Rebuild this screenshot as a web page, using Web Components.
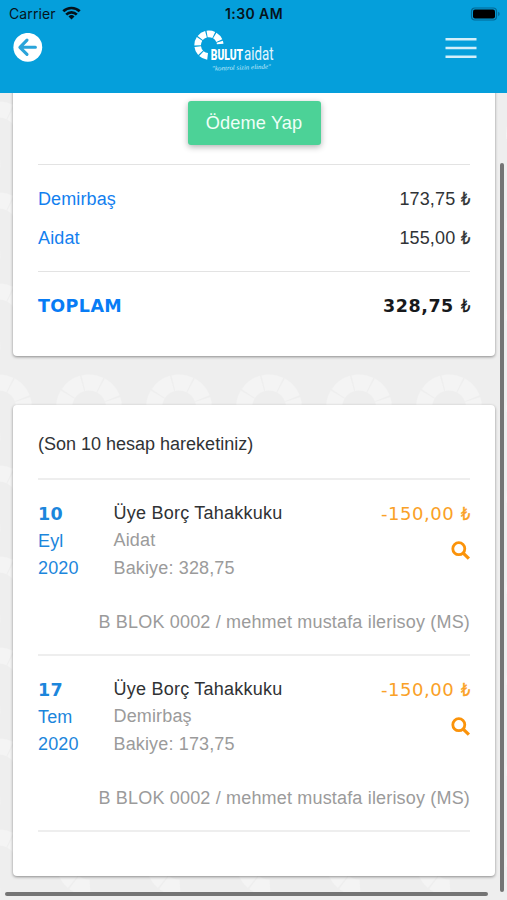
<!DOCTYPE html>
<html lang="tr">
<head>
<meta charset="utf-8">
<title>Bulut Aidat</title>
<style>
html,body{margin:0;height:100%;overflow:hidden;background:#eeeeee}
body{font-family:"Liberation Sans",Arial,sans-serif;font-size:18px;color:#303336}
</style>
</head>
<body>
<aidat-app></aidat-app>
<script>
const define = (name, html) => customElements.define(name, class extends HTMLElement {
  constructor() {
    super();
    const t = document.createElement('template');
    t.innerHTML = html;
    this.attachShadow({mode: 'open'}).append(t.content.cloneNode(true));
  }
});

define('status-bar', `<style>
:host{display:grid;grid-template-columns:216px auto 1fr;align-items:center;height:28px;padding:0 5px 0 9px;color:#06141c;font:14px/28px Inter,sans-serif}
.left{display:flex;align-items:center;gap:6px;letter-spacing:.1px}
.time{font-weight:600;font-size:14px;letter-spacing:.4px}
.right{justify-self:end;display:flex;margin-top:-1px;margin-right:1px}
.left svg{margin-top:-2px}
svg{display:block}
</style>
<div class="left"><span>Carrier</span><svg width="19" height="14" viewBox="0 0 19 14"><g fill="none" stroke="#04121a" stroke-width="2.7"><path d="M1.3 5.3a11.8 11.8 0 0 1 16.4 0"/><path d="M4.2 8.6a7.6 7.6 0 0 1 10.6 0"/></g><path fill="#04121a" d="M9.5 13.6 6.5 10.5a4.3 4.3 0 0 1 6 0z"/></svg></div>
<span class="time">1:30 AM</span>
<div class="right"><svg width="31" height="14" viewBox="0 0 31 14"><rect x="1.5" y="1" width="25" height="12" rx="3.4" fill="none" stroke="#036995" stroke-width="1.2"/><rect x="3" y="2.6" width="22" height="8.8" rx="2" fill="#000"/><path d="M28.2 4.8a2.4 2.4 0 0 1 0 4.4z" fill="#036995"/></svg></div>`);

define('brand-logo', `<style>
:host{display:block}svg{display:block;overflow:visible}
</style>
<svg width="90" height="46" viewBox="192 29 90 46">
<path d="M206.6 56.4A11.3 11.3 0 1 1 219.2 44" fill="none" stroke="#fff" stroke-width="6.6" stroke-dasharray="6.9 1.1"/>
<text x="209.8" y="59.6" font-family="Roboto,sans-serif" font-weight="900" font-size="14.5" fill="#fff" textLength="32.2" lengthAdjust="spacingAndGlyphs">BULUT</text>
<text x="243" y="59.6" font-family="Roboto,sans-serif" font-size="17.5" fill="#e2f5fd" textLength="29.5" lengthAdjust="spacingAndGlyphs">aidat</text>
<text x="211" y="70.6" transform="rotate(-2 211 70)" font-family="Liberation Serif,serif" font-style="italic" font-size="6.6" fill="#c2eafa" textLength="59" lengthAdjust="spacingAndGlyphs">"kontrol sizin elinde"</text>
</svg>`);

define('app-header', `<style>
:host{display:block;height:93px;background:#059fdb;position:relative;z-index:1}
nav{display:grid;grid-template-columns:179.5px auto 1fr;padding:1px 30px 0 13px}
.back{margin-top:4px}.menu{justify-self:end;margin-top:8px}
svg{display:block}
</style>
<status-bar></status-bar>
<nav>
<svg class="back" width="30" height="30" viewBox="0 0 30 30"><circle cx="14.8" cy="14.3" r="14.4" fill="#fff"/><path d="M22.4 14.3H8.2M14 7.2 6.9 14.3l7.1 7.1" fill="none" stroke="#2aa4da" stroke-width="3.1" stroke-linecap="round" stroke-linejoin="round"/></svg>
<brand-logo></brand-logo>
<svg class="menu" width="32" height="24" viewBox="0 0 32 24"><path d="M.5 2.3h31M.5 11h31M.5 19.7h31" stroke="#d3effa" stroke-width="2.4"/></svg>
</nav>`);

define('bg-pattern', `<style>
:host{position:absolute;inset:0;z-index:-1}svg{display:block}
</style>
<svg width="507" height="900"><defs><pattern id="p" width="90" height="91" patternUnits="userSpaceOnUse" x="-45" y="362"><path d="M45 68.5A25 25 0 1 1 69 43" fill="none" stroke="#f4f4f4" stroke-width="16" stroke-dasharray="17 1.3" transform="translate(0 2)"/></pattern></defs><rect width="507" height="900" fill="#eee"/><rect width="507" height="900" fill="url(#p)"/></svg>`);

define('info-card', `<style>
:host{display:block;box-sizing:border-box;background:#fff;border-radius:4px;padding:0 25px;box-shadow:0 1px 3px rgba(0,0,0,.42)}
</style><slot></slot>`);

define('pay-button', `<style>
:host{display:flex;justify-content:center}
button{width:133px;height:44px;border:0;border-radius:3px;background:#4cd297;color:#effff7;font:18.2px/44px "Liberation Sans",sans-serif;padding:0;letter-spacing:.15px;box-shadow:0 2px 6px rgba(0,0,0,.3)}
</style><button><slot></slot></button>`);

define('summary-row', `<style>
:host{display:flex;justify-content:space-between;align-items:center;height:39px;line-height:39px}
.label{color:#1380ef;letter-spacing:.12px}
.amount{letter-spacing:.15px}
:host([total]){font:bold 17.5px/39px "DejaVu Sans",sans-serif}
:host([total]) .label{color:#087cf5;letter-spacing:.4px}
:host([total]) .amount{letter-spacing:.55px;color:#17191c}
</style><span class="label"><slot></slot></span><span class="amount"><slot name="amount"></slot></span>`);

define('rule-line', `<style>:host{display:block;height:1px;background:#e3e3e3}:host([thick]){height:2px;background:#eee}</style>`);

define('account-entry', `<style>
:host{display:block;height:174px;box-sizing:border-box;padding-top:20px}
.main{display:grid;grid-template-columns:75.5px 1fr auto;line-height:27.3px}
.date{color:#1c86dc}
.day{font:bold 17.5px/27.3px "DejaVu Sans",sans-serif;letter-spacing:.3px;padding-top:1px;margin-bottom:-.5px}
.month,.year{letter-spacing:.15px}.year{margin-top:-.5px}
.info{color:#9b9b9b;letter-spacing:.15px}
.title{color:#303234;letter-spacing:.23px}
.side{text-align:right;color:#faa127;font:18px/27.3px "DejaVu Sans",sans-serif;letter-spacing:.55px}
svg{display:block;margin:14px 0 0 auto}
.owner{color:#9b9b9b;text-align:right;line-height:27px;margin-top:27px;white-space:nowrap;letter-spacing:.175px}
</style>
<div class="main">
<div class="date"><div class="day"><slot name="day"></slot></div><div class="month"><slot name="month"></slot></div><div class="year"><slot name="year"></slot></div></div>
<div class="info"><div class="title"><slot name="title"></slot></div><div><slot name="kind"></slot></div><div><slot name="balance"></slot></div></div>
<div class="side"><slot name="amount"></slot><svg width="19" height="19" viewBox="0 0 19 19" fill="none" stroke="#fb930a"><circle cx="7.8" cy="7.7" r="6" stroke-width="2.8"/><path d="m12.2 12.1 5.7 5.6" stroke-width="3.2"/></svg></div>
</div>
<div class="owner"><slot name="owner"></slot></div>`);

define('scroll-thumb', `<style>
:host{display:block;position:absolute;z-index:2;background:#747474;border-radius:2px}
:host([axis=y]){left:500px;top:163px;width:4px;height:729px}
:host([axis=x]){left:5px;top:892px;width:483px;height:4px}
</style>`);

define('aidat-app', `<style>
:host{display:block;position:relative;z-index:0;width:507px;height:900px;overflow:hidden;isolation:isolate}
main{padding:0 12px 0 13px}
.summary{margin-top:-20px;padding-top:28px;height:283px}
.summary pay-button{margin-bottom:19px}
.first{margin-top:15px}
.gap{margin-top:13px;margin-bottom:15px}
.history{height:471px;margin-top:49px;padding-top:25px}
.caption{line-height:28px;height:48px}
i{font:17px/20px "DejaVu Sans",sans-serif;letter-spacing:0;display:inline-block;width:9.5px;white-space:nowrap;transform:scaleX(.86);transform-origin:0 50%;-webkit-text-stroke:.35px currentColor}
</style>
<bg-pattern></bg-pattern>
<app-header></app-header>
<main>
<info-card class="summary">
<pay-button>Ödeme Yap</pay-button>
<rule-line></rule-line>
<summary-row class="first">Demirbaş<span slot="amount">173,75 <i>₺</i></span></summary-row>
<summary-row>Aidat<span slot="amount">155,00 <i>₺</i></span></summary-row>
<rule-line class="gap"></rule-line>
<summary-row total>TOPLAM<span slot="amount">328,75 <i>₺</i></span></summary-row>
</info-card>
<info-card class="history">
<div class="caption">(Son 10 hesap hareketiniz)</div>
<rule-line thick></rule-line>
<account-entry><span slot="day">10</span><span slot="month">Eyl</span><span slot="year">2020</span><span slot="title">Üye Borç Tahakkuku</span><span slot="kind">Aidat</span><span slot="balance">Bakiye: 328,75</span><span slot="amount">-150,00 <i>₺</i></span><span slot="owner">B BLOK 0002 / mehmet mustafa ilerisoy (MS)</span></account-entry>
<rule-line thick></rule-line>
<account-entry><span slot="day">17</span><span slot="month">Tem</span><span slot="year">2020</span><span slot="title">Üye Borç Tahakkuku</span><span slot="kind">Demirbaş</span><span slot="balance">Bakiye: 173,75</span><span slot="amount">-150,00 <i>₺</i></span><span slot="owner">B BLOK 0002 / mehmet mustafa ilerisoy (MS)</span></account-entry>
<rule-line thick></rule-line>
</info-card>
</main>
<scroll-thumb axis="y"></scroll-thumb>
<scroll-thumb axis="x"></scroll-thumb>`);
</script>
</body>
</html>
